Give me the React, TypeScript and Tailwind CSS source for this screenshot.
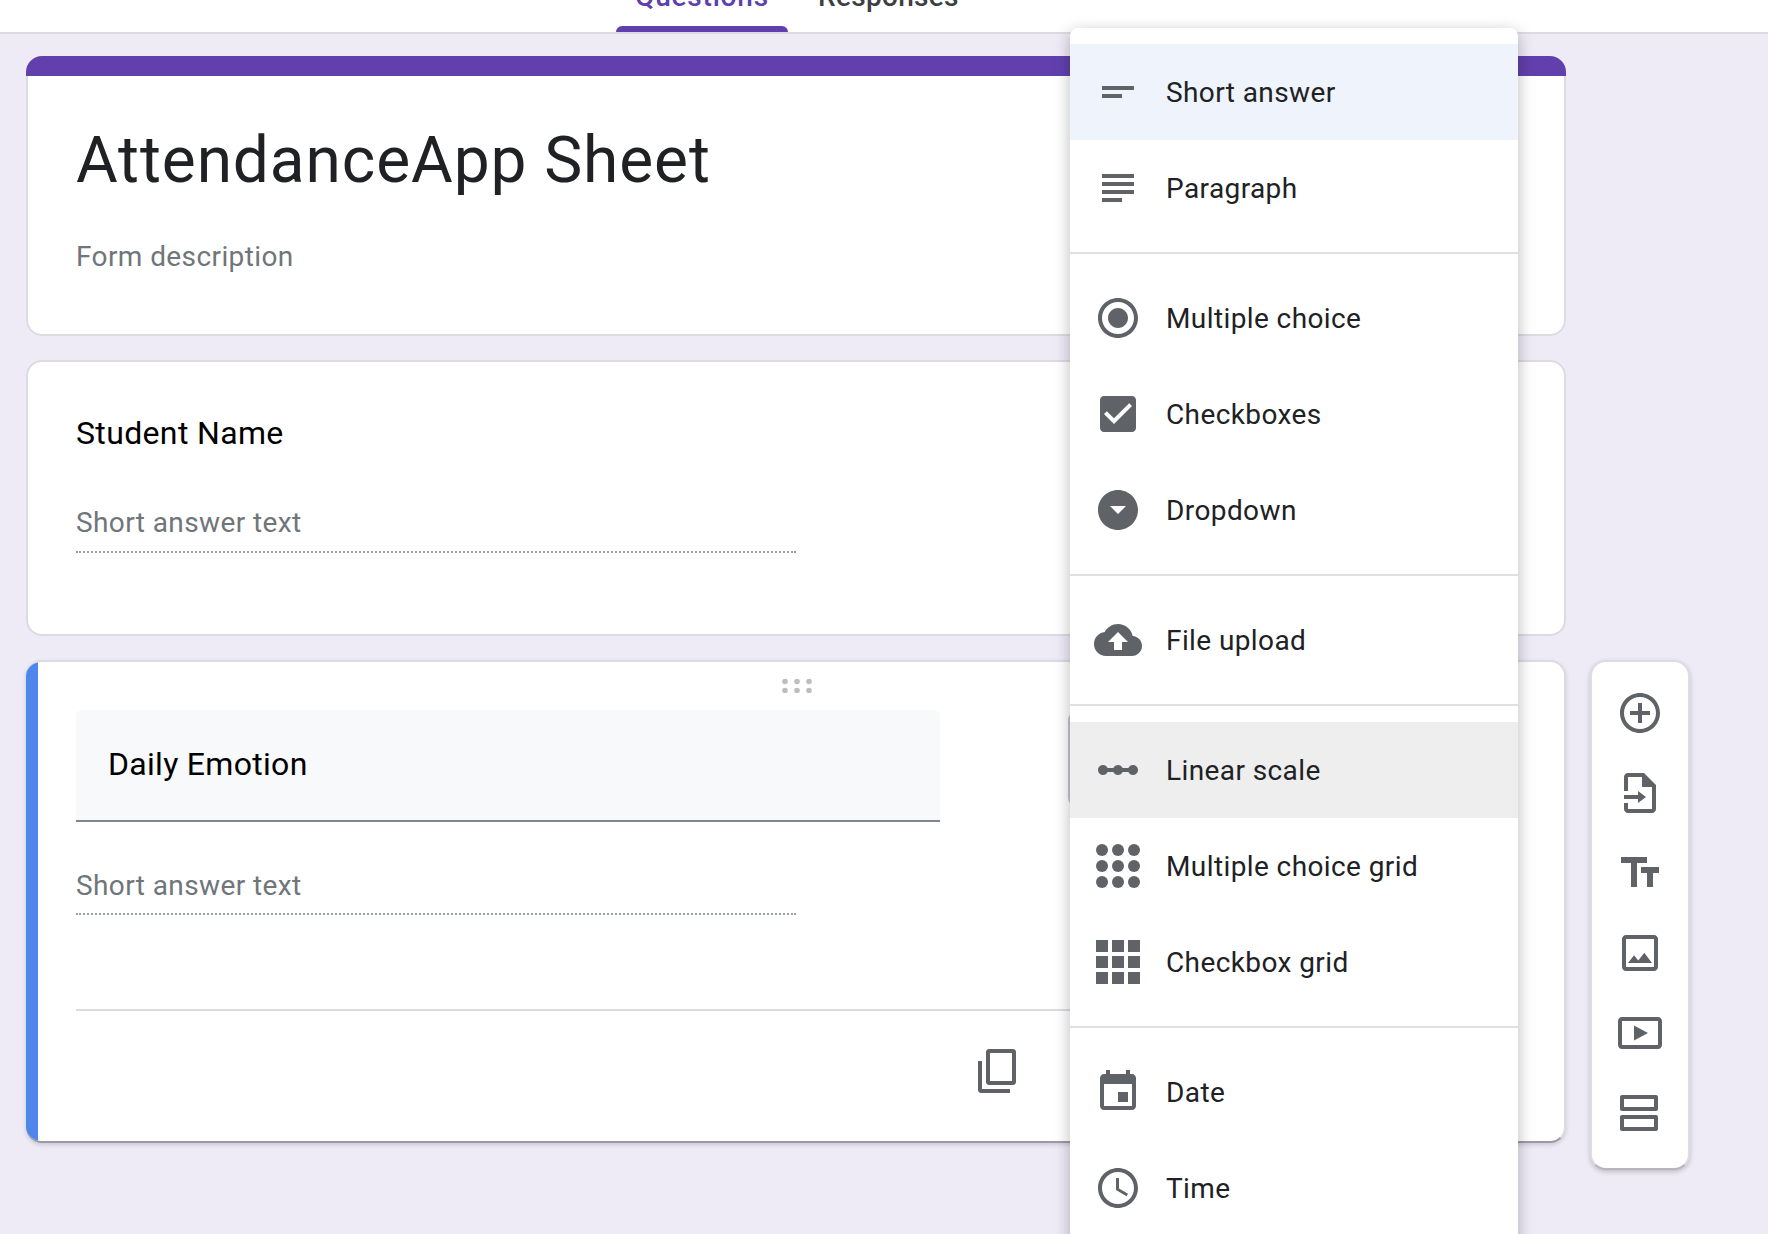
import React from 'react';

const roboto = "font-['Roboto',sans-serif]";

const paths = {
  short: 'M4 9h16v2H4zm0 4h10v2H4z',
  paragraph: 'M14 17H4v2h10v-2zm6-8H4v2h16V9zM4 15h16v-2H4v2zM4 5v2h16V5H4z',
  radio:
    'M12 7c-2.76 0-5 2.24-5 5s2.24 5 5 5 5-2.24 5-5-2.24-5-5-5zm0-5C6.48 2 2 6.48 2 12s4.48 10 10 10 10-4.48 10-10S17.52 2 12 2zm0 18c-4.42 0-8-3.58-8-8s3.58-8 8-8 8 3.58 8 8-3.58 8-8 8z',
  check:
    'M19 3H5c-1.11 0-2 .9-2 2v14c0 1.1.89 2 2 2h14c1.11 0 2-.9 2-2V5c0-1.1-.89-2-2-2zm-9 14l-5-5 1.41-1.41L10 14.17l7.59-7.59L19 8l-9 9z',
  dropdown: 'M12 2C6.48 2 2 6.48 2 12s4.48 10 10 10 10-4.48 10-10S17.52 2 12 2zm0 12l-4-4h8l-4 4z',
  upload:
    'M19.35 10.04C18.67 6.59 15.64 4 12 4 9.11 4 6.6 5.64 5.35 8.04 2.34 8.36 0 10.91 0 14c0 3.31 2.69 6 6 6h13c2.76 0 5-2.24 5-5 0-2.64-2.05-4.78-4.65-4.96zM14 13v4h-4v-4H7l5-5 5 5h-3z',
  linear:
    'M19.5 9.5c-1.03 0-1.9.62-2.29 1.5h-2.92c-.39-.88-1.26-1.5-2.29-1.5s-1.9.62-2.29 1.5H6.79c-.39-.88-1.26-1.5-2.29-1.5C3.12 9.5 2 10.62 2 12s1.12 2.5 2.5 2.5c1.03 0 1.9-.62 2.29-1.5h2.92c.39.88 1.26 1.5 2.29 1.5s1.9-.62 2.29-1.5h2.92c.39.88 1.26 1.5 2.29 1.5 1.38 0 2.5-1.12 2.5-2.5s-1.12-2.5-2.5-2.5z',
  date: 'M17 12h-5v5h5v-5zM16 1v2H8V1H6v2H5c-1.11 0-1.99.9-1.99 2L3 19c0 1.1.89 2 2 2h14c1.1 0 2-.9 2-2V5c0-1.1-.9-2-2-2h-1V1h-2zm3 18H5V8h14v11z',
  time: 'M11.99 2C6.47 2 2 6.48 2 12s4.47 10 9.99 10C17.52 22 22 17.52 22 12S17.52 2 11.99 2zM12 20c-4.42 0-8-3.58-8-8s3.58-8 8-8 8 3.58 8 8-3.58 8-8 8zm.5-13H11v6l5.25 3.15.75-1.23-4.5-2.67z',
  // Kopier-Symbol: Rechteck vorne oben, Winkel hinten unten links
  copy: 'M8 1h12c.83 0 1.5.67 1.5 1.5v15c0 .83-.67 1.5-1.5 1.5H8c-.83 0-1.5-.67-1.5-1.5v-15C6.5 1.67 7.17 1 8 1zm.5 2v14h11V3h-11zM2.5 7h2v14h14v2H4c-.83 0-1.5-.67-1.5-1.5V7z',
  add: 'M13 7h-2v4H7v2h4v4h2v-4h4v-2h-4V7zm-1-5C6.48 2 2 6.48 2 12s4.48 10 10 10 10-4.48 10-10S17.52 2 12 2zm0 18c-4.41 0-8-3.59-8-8s3.59-8 8-8 8 3.59 8 8-3.59 8-8 8z',
  importForm:
    'M14 2H6c-1.1 0-2 .9-2 2v7h2V4h7v5h5v11H6v-3H4v3c0 1.1.9 2 2 2h12c1.1 0 2-.9 2-2V8l-6-6zM4 13h7v-2l4 3-4 3v-2H4z',
  title: 'M2.5 4v3h5v12h3V7h5V4h-13zm19 5h-9v3h3v7h3v-7h3V9z',
  image:
    'M19 5v14H5V5h14m0-2H5c-1.1 0-2 .9-2 2v14c0 1.1.9 2 2 2h14c1.1 0 2-.9 2-2V5c0-1.1-.9-2-2-2zm-4.86 8.86l-3 3.87L9 13.14 6 17h12l-3.86-5.14z',
  video:
    'M3 4h18c1.1 0 2 .9 2 2v12c0 1.1-.9 2-2 2H3c-1.1 0-2-.9-2-2V6c0-1.1.9-2 2-2zm0 2v12h18V6H3zm6 2.2l7 3.8-7 3.8z',
  section:
    'M20 13H3c-.55 0-1 .45-1 1v6c0 .55.45 1 1 1h17c.55 0 1-.45 1-1v-6c0-.55-.45-1-1-1zm-1 6H4v-4h15v4zM20 3H3c-.55 0-1 .45-1 1v6c0 .55.45 1 1 1h17c.55 0 1-.45 1-1V4c0-.55-.45-1-1-1zm-1 6H4V5h15v4z',
};

const Icon = ({ d }: { d: string }) => (
  <svg viewBox="0 0 24 24" className="w-12 h-12 fill-[#5f6368] shrink-0">
    <path d={d} fillRule="evenodd" />
  </svg>
);

const GridDots = () => (
  <svg viewBox="0 0 24 24" className="w-12 h-12 fill-[#5f6368] shrink-0">
    {[4, 12, 20].map((y) =>
      [4, 12, 20].map((x) => <circle key={`${x}-${y}`} cx={x} cy={y} r={3} />)
    )}
  </svg>
);

const GridSquares = () => (
  <svg viewBox="0 0 24 24" className="w-12 h-12 fill-[#5f6368] shrink-0">
    {[1, 9, 17].map((y) =>
      [1, 9, 17].map((x) => <rect key={`${x}-${y}`} x={x} y={y} width={6} height={6} />)
    )}
  </svg>
);

const MenuItem = ({ icon, label, className = '' }: { icon: React.ReactNode; label: string; className?: string }) => (
  <div className={`h-24 flex items-center pl-6 ${className}`}>
    {icon}
    <span className="ml-6 pt-[1px] text-[28px] tracking-[0.4px] text-[#202124] whitespace-nowrap">{label}</span>
  </div>
);

const TypeMenu = () => (
  <div className={`absolute left-[1070px] top-[28px] w-[448px] bg-white rounded-t-lg shadow-[0_4px_16px_rgba(0,0,0,0.28)] ${roboto}`}>
    <div className="py-4 border-b-2 border-[#e0e0e0]">
      <MenuItem icon={<Icon d={paths.short} />} label="Short answer" className="bg-[#eff3fb]" />
      <MenuItem icon={<Icon d={paths.paragraph} />} label="Paragraph" />
    </div>
    <div className="py-4 border-b-2 border-[#e0e0e0]">
      <MenuItem icon={<Icon d={paths.radio} />} label="Multiple choice" />
      <MenuItem icon={<Icon d={paths.check} />} label="Checkboxes" />
      <MenuItem icon={<Icon d={paths.dropdown} />} label="Dropdown" />
    </div>
    <div className="py-4 border-b-2 border-[#e0e0e0]">
      <MenuItem icon={<Icon d={paths.upload} />} label="File upload" />
    </div>
    <div className="py-4 border-b-2 border-[#e0e0e0]">
      <MenuItem icon={<Icon d={paths.linear} />} label="Linear scale" className="bg-[#eeeeee]" />
      <MenuItem icon={<GridDots />} label="Multiple choice grid" />
      <MenuItem icon={<GridSquares />} label="Checkbox grid" />
    </div>
    <div className="py-4">
      <MenuItem icon={<Icon d={paths.date} />} label="Date" />
      <MenuItem icon={<Icon d={paths.time} />} label="Time" />
    </div>
  </div>
);

const ShortAnswer = ({ className }: { className: string }) => (
  <div className={`w-[720px] border-b-2 border-dotted border-[#9aa0a6] text-[28px] leading-10 tracking-[0.4px] text-[#70757a] ${className}`}>
    Short answer text
  </div>
);

export default function App() {
  return (
    <div className={`relative h-[1234px] overflow-hidden bg-[#eeebf7] ${roboto}`}>
      {/* Kopfzeile mit Tabs, oben abgeschnitten */}
      <div className="h-[34px] bg-white border-b-2 border-[#dadce0] flex items-end pl-[616px] overflow-hidden">
        <div className="relative w-[172px] h-[72px] flex justify-center">
          <span className="text-[28px] leading-[40px] mt-[17px] font-medium tracking-[0.8px] text-[#5e3fb0] h-fit">Questions</span>
          <div className="absolute left-0 right-0 bottom-0 h-[6px] bg-[#6140ad] rounded-t-md" />
        </div>
        <span className="ml-[30px] mb-[15px] text-[28px] leading-[40px] font-medium tracking-[0.3px] text-[#3c4043]">Responses</span>
      </div>

      <div className="flex items-start pl-[26px] pt-[22px] gap-6">
        <div className="w-[1540px] flex flex-col gap-6">
          {/* Titelkarte */}
          <div className="h-[280px] rounded-2xl overflow-hidden flex flex-col">
            <div className="h-5 bg-[#6140ad] shrink-0" />
            <div className="flex-1 bg-white border-2 border-t-0 border-[#dadce0] rounded-b-2xl pl-12 pt-[49px]">
              <div className="text-[64px] leading-[72px] tracking-[0.9px] text-[#202124]">AttendanceApp Sheet</div>
              <div className="mt-10 text-[28px] leading-10 tracking-[0.4px] text-[#70757a]">Form description</div>
            </div>
          </div>

          {/* Frage 1 */}
          <div className="h-[276px] bg-white border-2 border-[#dadce0] rounded-2xl pl-12 pt-[51px]">
            <div className="text-[32px] leading-10 tracking-[0.35px] text-black">Student Name</div>
            <div className="mt-[50px]">
              <ShortAnswer className="h-[50px]" />
            </div>
          </div>

          {/* Frage 2, aktiv */}
          <div className="h-[483px] bg-white rounded-2xl border-2 border-l-0 border-[#dadce0] border-b-[#9b9ca3] shadow-[0_2px_4px_rgba(0,0,0,0.15)] overflow-hidden flex">
            <div className="w-3 bg-[#4f86ec] shrink-0" />
            <div className="flex-1 pl-[38px]">
              <div className="h-12 flex items-center justify-center pr-[46px]">
                <svg viewBox="0 0 30 14" className="w-[30px] h-[14px] fill-[#bdbdbd]">
                  {[2.5, 11.5].map((y) =>
                    [3, 15, 27].map((x) => <circle key={`${x}-${y}`} cx={x} cy={y} r={2.8} />)
                  )}
                </svg>
              </div>
              <div className="flex items-start gap-[128px]">
                <div className="w-[864px] h-[112px] bg-[#f8f9fa] border-b-2 border-[#80868b] rounded-t-md pl-8 pt-[34px] text-[32px] leading-10 tracking-[0.3px] text-black shrink-0">
                  Daily Emotion
                </div>
                <div className="w-[400px] h-[94px] mt-[2px] border-2 border-[#c5c6d0] rounded-lg shrink-0" />
              </div>
              <div className="mt-[44px]">
                <ShortAnswer className="h-[49px]" />
              </div>
              <div className="mt-[94px] mr-12 border-t-2 border-[#dadce0] pt-9 pl-[897px]">
                <Icon d={paths.copy} />
              </div>
            </div>
          </div>
        </div>

        {/* Seitenleiste */}
        <div className="w-[100px] h-[510px] mt-[604px] bg-white rounded-2xl border-2 border-[#dcdce4] border-b-[#b5b5bb] shadow-[0_2px_5px_rgba(0,0,0,0.2)] flex flex-col items-center pt-[27px] gap-8 shrink-0">
          <Icon d={paths.add} />
          <Icon d={paths.importForm} />
          <Icon d={paths.title} />
          <Icon d={paths.image} />
          <Icon d={paths.video} />
          <Icon d={paths.section} />
        </div>
      </div>

      <TypeMenu />
    </div>
  );
}
